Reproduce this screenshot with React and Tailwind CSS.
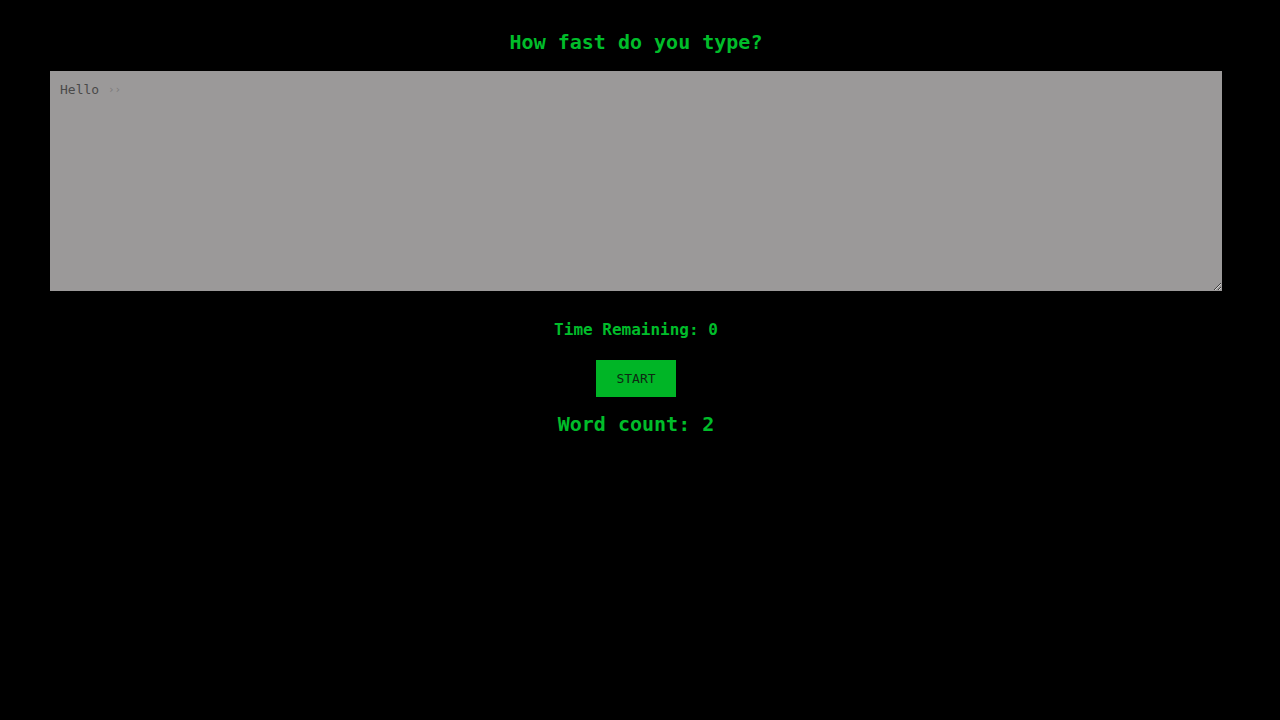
import {useState} from "react";

export default function App() {
    const [text, setText] = useState("Hello");
    const [timeRemaining] = useState(0);

    const wordCount = 2;

    return (
        <div className="min-h-[720px] bg-black font-['DejaVu_Sans_Mono',monospace]">
            <div className="w-[1272px] flex flex-col items-center pt-[30px]">
                <h1 className="text-[20px] leading-[24px] font-bold text-[#00bd2a]">How fast do you type?</h1>

                <div className="relative mt-[17px] w-[1172px]">
                    <textarea
                        value={text}
                        onChange={(e) => setText(e.target.value)}
                        className="block w-full h-[220px] bg-[#9b9999] text-[#4a4a4a] text-[13px] leading-[18px] px-[10px] py-[10px] outline-none border-0 resize-y font-['DejaVu_Sans_Mono',monospace]"
                    />
                    <span className="absolute left-[58px] top-[10px] text-[11px] leading-[18px] text-[#7d7b7b] pointer-events-none">››</span>
                </div>

                <h4 className="mt-[29px] text-[16px] leading-[20px] font-bold text-[#00bd2a]">Time Remaining: {timeRemaining}</h4>

                <button className="mt-[20px] w-[80px] h-[37px] bg-[#00b526] text-[#0d2a12] text-[13px] font-['DejaVu_Sans_Mono',monospace]">
                    START
                </button>

                <h1 className="mt-[15px] text-[20px] leading-[24px] font-bold text-[#00bd2a]">Word count: {wordCount}</h1>
            </div>
        </div>
    );
}
